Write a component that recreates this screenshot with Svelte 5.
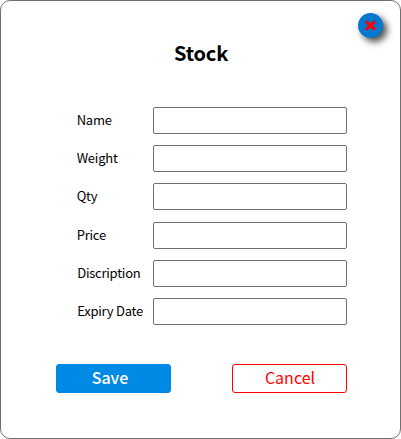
<script>
  const fields = [
    { id: 'name', label: 'Name' },
    { id: 'weight', label: 'Weight' },
    { id: 'qty', label: 'Qty' },
    { id: 'price', label: 'Price' },
    { id: 'description', label: 'Discription' },
    { id: 'expiry', label: 'Expiry Date' }
  ];
</script>

<form class="dialog">
  <button type="button" class="close" aria-label="Close">
    <svg width="13" height="11" viewBox="0 0 13 11">
      <path d="M3.1 2.4 L9.9 8.6 M9.9 2.4 L3.1 8.6" stroke="#ff0000" stroke-width="3" stroke-linecap="square" fill="none" />
    </svg>
  </button>
  <h1>Stock</h1>
  <div class="fields">
    {#each fields as field (field.id)}
      <div class="row {field.id}">
        <label for={field.id}>{field.label}</label>
        <input id={field.id} type="text" />
      </div>
    {/each}
  </div>
  <div class="actions">
    <button type="button" class="save">Save</button>
    <button type="button" class="cancel">Cancel</button>
  </div>
</form>

<style>
  :global(body) {
    margin: 0;
    background: #fff;
  }
  * {
    box-sizing: border-box;
  }
  .dialog {
    position: relative;
    width: 401px;
    height: 439px;
    border: 1px solid #707070;
    border-radius: 10px;
    background: #fff;
    font-family: "Noto Sans CJK SC", "Noto Sans", sans-serif;
    color: #000;
    overflow: hidden;
  }
  .close {
    position: absolute;
    top: 12px;
    right: 17px;
    width: 25px;
    height: 25px;
    padding: 0;
    border: 0;
    border-radius: 50%;
    background: #0078d0;
    box-shadow: 4px 4px 7px rgba(0, 0, 0, 0.7);
    display: flex;
    align-items: center;
    justify-content: center;
  }
  h1 {
    margin: 37px 0 0;
    height: 30px;
    padding-left: 1px;
    font-size: 20px;
    letter-spacing: -0.2px;
    line-height: 30px;
    font-weight: 700;
    text-align: center;
  }
  .fields {
    margin: 39px 53px 0 75.7px;
    display: flex;
    flex-direction: column;
    gap: 11px;
  }
  .row {
    display: flex;
    justify-content: space-between;
    align-items: center;
    height: 27px;
  }
  .row.price {
    margin-top: 1px;
  }
  .row.description label,
  .row.expiry label {
    padding-left: 0.5px;
  }
  label {
    padding-bottom: 1px;
    font-size: 13px;
    letter-spacing: -0.24px;
    line-height: 20px;
    white-space: nowrap;
  }
  input {
    width: 194px;
    height: 27px;
    border: 1px solid #707070;
    border-radius: 2px;
    background: #fff;
    padding: 0 6px;
    font: inherit;
    font-size: 13px;
  }
  .actions {
    margin: 39px 53px 0 55px;
    display: flex;
    justify-content: space-between;
  }
  .actions button {
    width: 115px;
    height: 29px;
    padding: 0 0 2px;
    border-radius: 3px;
    font-family: inherit;
    font-size: 16px;
    line-height: 25px;
  }
  .actions .save {
    border: 1px solid #008ae6;
    background: #008ae6;
    color: #fff;
    font-weight: 500;
    padding-right: 7px;
  }
  .actions .cancel {
    border: 1px solid #ff0000;
    background: #fff;
    color: #ff0000;
    padding-left: 1px;
  }
</style>
